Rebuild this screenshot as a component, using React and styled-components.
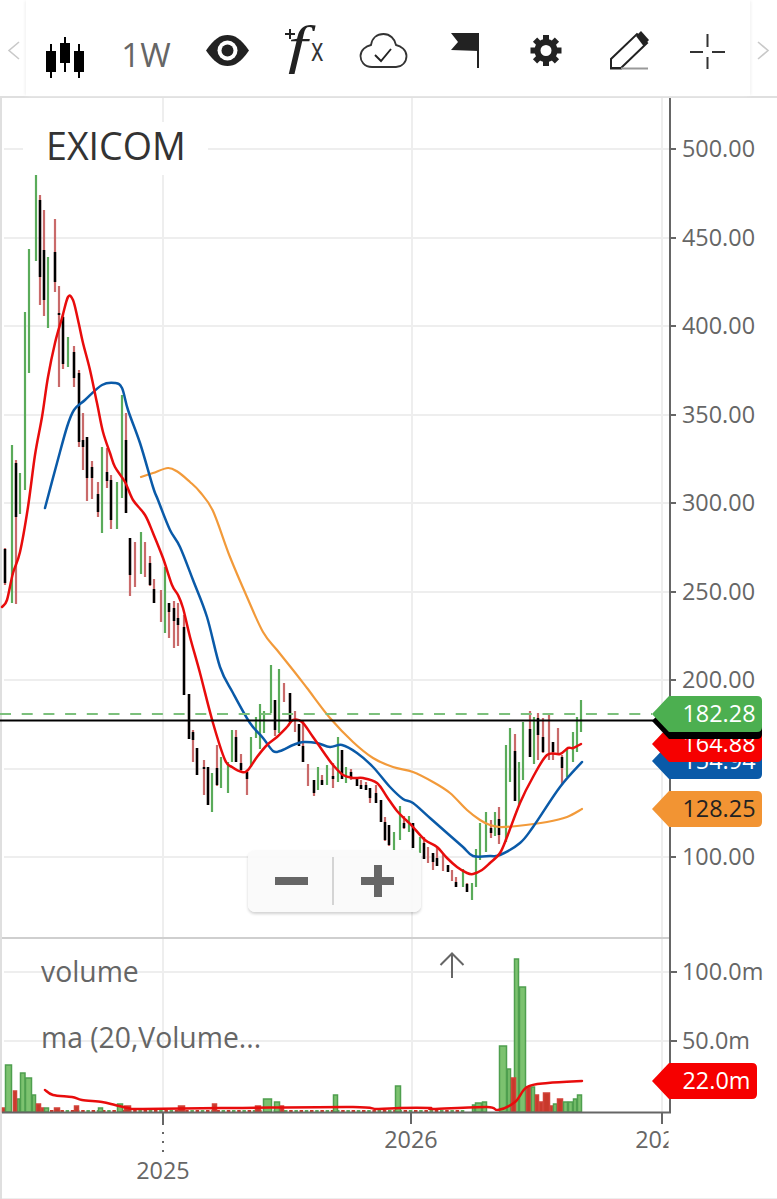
import React from "react";
import styled, { createGlobalStyle } from "styled-components";

const GlobalStyle = createGlobalStyle`
  html, body {
    margin: 0;
    padding: 0;
    background: #fff;
    font-family: "Open Sans", "Noto Sans", sans-serif;
  }
`;

const Page = styled.div`
  width: 777px;
  height: 1199px;
  display: flex;
  flex-direction: column;
  overflow: hidden;
  background: #fff;
`;

const Toolbar = styled.div`
  display: flex;
  height: 96px;
  flex-shrink: 0;
  border-bottom: 2px solid #dfdfdf;
`;

const NavArrow = styled.svg`
  width: ${({ $width }) => $width}px;
  height: 96px;
  flex-shrink: 0;
  display: block;
  fill: none;
  stroke: #c9c9c9;
  stroke-width: 1.6;
`;

const ToolStrip = styled.div`
  width: 724px;
  display: flex;
  flex-shrink: 0;
  box-shadow: -2px 0 3px -1px #f0f0f0, 2px 0 3px -1px #f0f0f0;
`;

const ToolButton = styled.div`
  width: 80px;
  height: 96px;
  flex-shrink: 0;
`;

const ToolSvg = styled.svg`
  display: block;
  width: 80px;
  height: 96px;
`;

const IntervalText = styled.div`
  width: 80px;
  height: 96px;
  padding-top: 33px;
  box-sizing: border-box;
  text-align: center;
  font-size: 33px;
  line-height: 44px;
  color: #666;
`;

const ChartArea = styled.div`
  position: relative;
  flex: 1;
  box-shadow: inset 2px 0 0 #dfdfdf, inset 0 -1px 0 #eee;
`;

const ChartSvg = styled.svg`
  display: block;
  width: 777px;
  height: 1101px;
`;

const GridLine = styled.line`
  stroke: #eee;
  stroke-width: 2;
`;

const AxisLine = styled.line`
  stroke: #666;
  stroke-width: 2;
`;

const AxisLabel = styled.text`
  font-family: "Open Sans", sans-serif;
  font-size: 23.4px;
  fill: ${({ $color }) => $color || "#666"};
`;

const MaLine = styled.path`
  fill: none;
  stroke: ${({ $color }) => $color};
  stroke-width: ${({ $width }) => $width || 2.5};
  stroke-linejoin: round;
  stroke-linecap: round;
`;

const SymbolLabel = styled.div`
  position: absolute;
  left: 23px;
  top: 24px;
  width: 185px;
  height: 53px;
  box-sizing: border-box;
  padding-left: 23px;
  background: #fff;
  font-size: 37.6px;
  line-height: 48px;
  color: #333;
`;

const StudyLabel = styled.div`
  position: absolute;
  left: 41px;
  top: ${({ $top }) => $top}px;
  font-size: 28.3px;
  line-height: 36px;
  color: #666;
  white-space: nowrap;
`;

const CollapseArrow = styled.svg`
  position: absolute;
  left: 438px;
  top: 853px;
  width: 28px;
  height: 29px;
  fill: none;
  stroke: #666;
  stroke-width: 2;
`;

const ZoomControl = styled.div`
  position: absolute;
  left: 248px;
  top: 752px;
  width: 173px;
  height: 62px;
  display: flex;
  align-items: center;
  border-radius: 7px;
  background: rgba(250, 250, 250, 0.92);
  box-shadow: 0 2px 3px rgba(0, 0, 0, 0.18);
`;

const ZoomButton = styled.div`
  position: relative;
  width: ${({ $width }) => $width}px;
  height: 48px;
  box-sizing: border-box;
  border-right: ${({ $divider }) => ($divider ? "2px solid #d4d4d4" : "none")};

  &::before {
    content: "";
    position: absolute;
    left: ${({ $left }) => $left}px;
    top: 20px;
    width: 33px;
    height: 8px;
    background: #666;
  }

  &::after {
    content: "";
    display: ${({ $plus }) => ($plus ? "block" : "none")};
    position: absolute;
    left: ${({ $left }) => $left + 12.5}px;
    top: 8px;
    width: 8px;
    height: 32px;
    background: #666;
  }
`;

const green = "#5aab5a";
const wickRed = "#c96a6a";

// [x, high, low] is an up week; [x, high, low, bodyTop, bodyBottom] is a down week
const bars = [
  [5, 548, 585, 549, 583], [12, 445, 603], [16, 460, 604, 463, 517], [20, 473, 514], [25, 312, 490], [29, 249, 373],
  [36, 175, 261], [40, 195, 305, 200, 277], [44, 210, 316, 250, 300], [48, 257, 328], [55, 219, 292, 252, 282],
  [59, 286, 387, 313, 315], [63, 314, 369, 317, 364], [68, 337, 367], [74, 346, 387, 352, 378], [79, 370, 447, 373, 442],
  [83, 413, 470, 440, 447], [87, 437, 501, 437, 478], [92, 461, 499, 467, 478], [98, 482, 517, 494, 512], [102, 447, 533],
  [107, 448, 488, 472, 481], [111, 475, 529, 480, 520], [117, 482, 529], [122, 395, 498], [126, 413, 513, 440, 513],
  [130, 538, 596, 538, 575], [135, 542, 587, 0, 0], [141, 532, 574], [145, 542, 577, 0, 0], [150, 556, 586, 563, 585],
  [154, 579, 603, 589, 603], [161, 590, 622, 0, 0], [165, 567, 633], [169, 603, 638, 603, 612], [174, 601, 648, 608, 621],
  [178, 603, 646, 618, 625], [184, 615, 695, 627, 695], [189, 694, 739, 694, 739], [193, 730, 762, 732, 740],
  [197, 748, 775, 748, 775], [204, 760, 795, 767, 769], [208, 767, 805, 767, 805], [212, 773, 812], [217, 745, 786, 768, 785],
  [221, 757, 788], [228, 762, 793], [232, 730, 762], [236, 730, 762, 737, 762], [241, 754, 772, 763, 770],
  [247, 772, 795, 772, 779], [251, 737, 767], [256, 717, 738], [260, 704, 749], [264, 711, 733], [271, 665, 713],
  [275, 700, 736, 700, 730], [279, 669, 733], [284, 683, 702, 0, 0], [290, 693, 722, 693, 722], [295, 711, 732, 0, 0],
  [299, 724, 746, 724, 746], [303, 720, 762, 746, 762], [308, 764, 786, 0, 0], [314, 780, 796, 780, 793], [318, 767, 790],
  [322, 775, 785, 780, 785], [327, 765, 785], [333, 763, 788, 776, 779], [338, 737, 782], [342, 750, 779, 750, 779],
  [346, 767, 783], [351, 769, 780, 772, 778], [357, 779, 786, 779, 786], [361, 780, 789, 785, 789], [366, 782, 790, 785, 790],
  [370, 788, 803, 788, 798], [376, 785, 803, 793, 803], [381, 800, 822, 800, 822], [385, 817, 841, 822, 840],
  [389, 825, 846, 825, 845], [394, 832, 850], [400, 806, 840], [404, 816, 829, 823, 828], [409, 816, 832],
  [413, 823, 848, 823, 848], [420, 837, 853], [424, 837, 859, 843, 859], [428, 847, 863, 0, 0], [433, 853, 870, 853, 862],
  [437, 847, 866, 858, 866], [443, 853, 871, 0, 0], [448, 865, 872, 865, 872], [452, 870, 881, 0, 0], [456, 877, 887, 882, 887],
  [463, 869, 887], [467, 883, 892, 884, 892], [472, 883, 900], [476, 849, 887], [480, 823, 860], [486, 812, 852],
  [491, 820, 838, 828, 833], [495, 812, 836], [499, 807, 844, 819, 835], [506, 745, 842], [510, 728, 782],
  [515, 734, 801, 751, 801], [519, 762, 805], [523, 722, 780], [530, 711, 757, 729, 757], [534, 717, 764],
  [538, 713, 760, 718, 735], [543, 718, 753, 737, 752], [549, 715, 760, 0, 0], [553, 742, 760, 742, 752], [558, 728, 755, 0, 0],
  [562, 755, 785, 757, 768], [567, 750, 777], [573, 732, 762], [577, 717, 752], [581, 700, 732],
];

// catmull-rom through the points, the moving averages are smooth in the chart
const smoothPath = (pts) => {
  let d = `M${pts[0][0]} ${pts[0][1]}`;
  for (let i = 0; i < pts.length - 1; i++) {
    const p0 = pts[i - 1] || pts[i];
    const p1 = pts[i];
    const p2 = pts[i + 1];
    const p3 = pts[i + 2] || p2;
    const c1x = p1[0] + (p2[0] - p0[0]) / 6;
    const c1y = p1[1] + (p2[1] - p0[1]) / 6;
    const c2x = p2[0] - (p3[0] - p1[0]) / 6;
    const c2y = p2[1] - (p3[1] - p1[1]) / 6;
    d += ` C${c1x.toFixed(1)} ${c1y.toFixed(1)} ${c2x.toFixed(1)} ${c2y.toFixed(1)} ${p2[0]} ${p2[1]}`;
  }
  return d;
};

const redMa = [
  [2, 607], [7, 600], [13, 573], [20, 552], [28, 507], [35, 455], [42, 417], [48, 377], [55, 343], [62, 318], [68, 297],
  [73, 300], [78, 320], [83, 343], [90, 370], [97, 403], [103, 432], [110, 453], [115, 467], [125, 482], [133, 500],
  [145, 515], [153, 533], [163, 558], [172, 585], [178, 595], [183, 608], [190, 637], [200, 673], [213, 723], [225, 760],
  [232, 767], [242, 772], [248, 770], [257, 757], [267, 745], [277, 737], [287, 727], [293, 720], [302, 722], [313, 737],
  [327, 757], [333, 765], [343, 775], [353, 778], [363, 778], [377, 783], [387, 797], [397, 811], [407, 821], [413, 827],
  [425, 840], [437, 847], [447, 858], [457, 867], [467, 873], [473, 874], [482, 870], [490, 863], [500, 853], [507, 837],
  [520, 803], [533, 777], [547, 755], [560, 754], [568, 748], [573, 748], [581, 744],
];

const blueMa = [
  [45, 508], [57, 463], [67, 427], [74, 410], [85, 400], [102, 385], [115, 383], [122, 388], [128, 410], [140, 443],
  [153, 487], [158, 500], [170, 530], [180, 547], [193, 580], [207, 617], [220, 667], [233, 693], [250, 723], [263, 738],
  [273, 751], [280, 751], [293, 745], [303, 742], [317, 743], [330, 747], [342, 745], [357, 753], [373, 767], [390, 787],
  [403, 799], [413, 803], [430, 818], [447, 833], [463, 847], [473, 856], [490, 856], [500, 855], [520, 843], [533, 827],
  [560, 787], [582, 762],
];

const orangeMa = [
  [141, 477], [153, 473], [168, 468], [178, 472], [190, 482], [200, 492], [213, 511], [230, 557], [247, 597], [263, 632],
  [277, 650], [293, 670], [307, 688], [330, 718], [353, 742], [373, 758], [393, 767], [413, 772], [433, 782], [450, 793],
  [467, 810], [480, 820], [490, 825], [500, 827], [517, 826], [547, 822], [567, 817], [582, 809],
];

const volumeMa = [
  [45, 1090], [53, 1095], [72, 1097], [82, 1100], [102, 1102], [115, 1105], [128, 1108], [143, 1109], [233, 1108], [353, 1107],
  [377, 1109], [400, 1108], [430, 1108], [433, 1109], [487, 1107], [498, 1110], [515, 1102], [527, 1087], [548, 1083], [582, 1081],
];

// [left, right, top, up?]
const volumes = [
  [2, 6, 1108, 0], [5, 12, 1065, 1], [17, 20, 1099, 1], [13, 17, 1091, 0], [20, 25.5, 1073, 1], [25, 32, 1078, 1], [32, 36, 1095, 1],
  [36, 41, 1104, 0], [41, 44, 1108, 0], [44, 49, 1108, 1], [54, 60, 1108, 0], [74, 79, 1106, 0], [98, 103, 1108, 1], [117, 123, 1104, 1],
  [124, 131, 1106, 0], [178, 185, 1106, 0], [212, 217, 1104, 0], [255, 261, 1106, 0], [263, 272, 1099, 1], [274, 280, 1102, 1],
  [280, 284, 1106, 0], [333, 338, 1095, 1], [395, 401, 1086, 1], [472, 475, 1105, 1], [475, 482, 1103, 1], [482, 487, 1102, 1],
  [499, 507, 1046, 1], [507, 511, 1069, 1], [514, 519, 959, 1], [519, 526, 987, 1], [511, 516, 1078, 0], [526, 531, 1087, 0],
  [531, 535, 1087, 1], [535, 539, 1095, 0], [539, 543, 1102, 0], [543, 550, 1093, 0], [550, 553, 1106, 0], [553, 557, 1104, 1],
  [557, 563, 1099, 0], [563, 568, 1102, 1], [568, 573, 1102, 1], [573, 577, 1099, 1], [577, 582, 1095, 1],
];

const lowVolumes = Array.from({ length: 80 }, (_, i) => 50 + i * 5.2);

const priceGrid = [149, 238, 326, 415, 503, 592, 680, 769, 857];
const priceLabels = [
  ["500.00", 149], ["450.00", 238], ["400.00", 326], ["350.00", 415], ["300.00", 503], ["250.00", 592], ["200.00", 680], ["100.00", 857],
];

const tags = [
  { y: 809, fill: "#f29433", text: "128.25", color: "#222", right: 762 },
  { y: 761, fill: "#0a5aa8", text: "154.94", color: "#fff", right: 762 },
  { y: 744, fill: "#f60000", text: "164.88", color: "#fff", right: 762 },
  { y: 721, fill: "#000", text: "", color: "#fff", right: 762 },
  { y: 714, fill: "#4caf50", text: "182.28", color: "#fff", right: 762 },
  { y: 1081, fill: "#f60000", text: "22.0m", color: "#fff", right: 757 },
];

const tagPath = (y, right) =>
  `M652 ${y} L669 ${y - 18} H${right - 5} Q${right} ${y - 18} ${right} ${y - 13} V${y + 13} Q${right} ${y + 18} ${right - 5} ${y + 18} H669 Z`;

const Bar = ({ bar }) => {
  const [x, hi, lo, top, bottom] = bar;
  if (bar.length === 3) {
    return <line x1={x} x2={x} y1={hi} y2={lo} stroke={green} strokeWidth="2.2" />;
  }
  return (
    <>
      <line x1={x} x2={x} y1={hi} y2={lo} stroke={wickRed} strokeWidth="2.2" />
      {top > 0 && <line x1={x} x2={x} y1={top} y2={bottom} stroke="#000" strokeWidth="2.5" />}
    </>
  );
};

const Tool = ({ index, children }) => (
  <ToolButton>
    <ToolSvg viewBox={`${26 + index * 80} 0 80 96`}>{children}</ToolSvg>
  </ToolButton>
);

const gearTeeth = [0, 45, 90, 135, 180, 225, 270, 315];

const App = () => {
  return (
    <Page>
      <GlobalStyle />
      <Toolbar>
        <NavArrow $width={26} viewBox="0 0 26 96">
          <polyline points="19,42 9,50.5 19,59" />
        </NavArrow>
        <ToolStrip>
          <Tool index={0}>
            <g fill="#000">
              <rect x="46" y="51" width="10" height="21" />
              <rect x="60" y="43" width="10" height="20" />
              <rect x="74" y="51" width="10" height="21" />
              <rect x="50" y="44" width="2" height="34" />
              <rect x="64" y="37" width="2" height="35" />
              <rect x="78" y="44" width="2" height="34" />
            </g>
          </Tool>
          <ToolButton>
            <IntervalText>1W</IntervalText>
          </ToolButton>
          <Tool index={2}>
            <path d="M206 50.5 C214 39 220 35 227.5 35 C235 35 241 39 249 50.5 C241 62 235 66 227.5 66 C220 66 214 62 206 50.5 Z" fill="#222" />
            <circle cx="227.5" cy="50.5" r="10" fill="#fff" />
            <circle cx="227.5" cy="50.5" r="6" fill="#222" />
          </Tool>
          <Tool index={3}>
            <path d="M285 34 H295 M290 29 V39" stroke="#222" strokeWidth="2" />
            <text transform="translate(288 63) scale(1.35 1)" fontFamily="Liberation Serif, serif" fontStyle="italic" fontSize="52" fill="#222">f</text>
            <text transform="translate(311 61) scale(0.72 1)" fontFamily="Open Sans, sans-serif" fontSize="33" fill="#333">x</text>
          </Tool>
          <Tool index={4}>
            <path d="M372 67 C364 67 360.5 61 360.5 56 C360.5 50 366 46 371 45 C372 38 377 34 383.5 34 C390 34 395 39 396 45 C401 46 406.5 50 406.5 56 C406.5 62 402 67 396 67 Z" fill="none" stroke="#333" strokeWidth="1.8" />
            <path d="M375 55 L381 61 L391 49" fill="none" stroke="#222" strokeWidth="1.9" />
          </Tool>
          <Tool index={5}>
            <path d="M451 50 L458 42 L451 33 H479 V51 Z" fill="#222" />
            <rect x="477" y="33" width="2" height="35" fill="#222" />
          </Tool>
          <Tool index={6}>
            <circle cx="546" cy="50.5" r="8.5" fill="none" stroke="#222" strokeWidth="6" />
            {gearTeeth.map((a) => (
              <rect key={a} x="543" y="35" width="6" height="6" fill="#222" transform={`rotate(${a} 546 50.5)`} />
            ))}
          </Tool>
          <Tool index={7}>
            <path d="M611 68 V59 L637 34 L647 43 L621 68 Z" fill="none" stroke="#222" strokeWidth="2" />
            <path d="M636 36 L641 31 L649 40 L643.5 46 Z" fill="#222" />
            <path d="M610 68.5 H622" stroke="#222" strokeWidth="2" />
            <path d="M621 68.5 H648" stroke="#999" strokeWidth="2" />
          </Tool>
          <Tool index={8}>
            <path d="M690 52 H703 M712 52 H725 M707.5 34 V47 M707.5 57 V69" stroke="#333" strokeWidth="2" />
          </Tool>
        </ToolStrip>
        <NavArrow $width={27} viewBox="750 0 27 96">
          <polyline points="758,42 768,50.5 758,59" />
        </NavArrow>
      </Toolbar>

      <ChartArea>
        <ChartSvg viewBox="0 98 777 1101">
          <defs>
            <clipPath id="timeAxisClip">
              <rect x="0" y="1113" width="668.5" height="60" />
            </clipPath>
          </defs>

          {priceGrid.map((y) => (
            <GridLine key={y} x1="4" x2="669" y1={y} y2={y} />
          ))}
          {[972, 1041].map((y) => (
            <GridLine key={y} x1="4" x2="669" y1={y} y2={y} />
          ))}
          {[163, 412, 662].map((x) => (
            <GridLine key={x} x1={x} x2={x} y1="98" y2="1112" />
          ))}

          {bars.map((bar) => (
            <Bar key={bar[0]} bar={bar} />
          ))}

          <MaLine $color="#f29a3a" $width={2.2} d={smoothPath(orangeMa)} />
          <MaLine $color="#0a5aa8" d={smoothPath(blueMa)} />
          <MaLine $color="#e80c0c" d={smoothPath(redMa)} />

          <line x1="0" x2="652" y1="714" y2="714" stroke="#7cc07c" strokeWidth="2" strokeDasharray="11 10.7" />
          <line x1="0" x2="655" y1="720.5" y2="720.5" stroke="#000" strokeWidth="2" />

          <line x1="2" x2="670" y1="938" y2="938" stroke="#cfcfcf" strokeWidth="2" />

          {lowVolumes.map((x, i) => (
            <rect key={x} x={x} y="1110" width="3.5" height="2" fill={i % 2 ? "#5aab5a" : "#c8392b"} />
          ))}
          {volumes.map(([left, right, top, up]) => (
            <rect
              key={left}
              x={left + 0.5}
              y={top}
              width={right - left - 1}
              height={1112 - top}
              fill={up ? "#7cc26f" : "#c8392b"}
              stroke={up ? "#4f9f4f" : "#d2433a"}
              strokeWidth="1.5"
            />
          ))}
          <MaLine $color="#e80c0c" d={smoothPath(volumeMa)} />

          <AxisLine x1="670" x2="670" y1="97" y2="1113" />
          <AxisLine x1="2" x2="671" y1="1112.5" y2="1112.5" />
          {priceLabels.map(([text, y]) => (
            <g key={text}>
              <AxisLine x1="670" x2="676" y1={y} y2={y} />
              <AxisLabel x="682" y={y + 8}>{text}</AxisLabel>
            </g>
          ))}
          <AxisLine x1="670" x2="677" y1="972" y2="972" />
          <AxisLabel x="682" y="980">100.0m</AxisLabel>
          <AxisLine x1="670" x2="677" y1="1041" y2="1041" />
          <AxisLabel x="682" y="1049">50.0m</AxisLabel>

          <AxisLine x1="163" x2="163" y1="1113" y2="1125" />
          <line x1="163" x2="163" y1="1132" y2="1152" stroke="#666" strokeWidth="2" strokeDasharray="2 7" />
          <AxisLine x1="411" x2="411" y1="1113" y2="1124" />
          <AxisLine x1="662" x2="662" y1="1113" y2="1124" />
          <AxisLabel x="163" y="1179" textAnchor="middle">2025</AxisLabel>
          <AxisLabel x="411" y="1148" textAnchor="middle">2026</AxisLabel>
          <g clipPath="url(#timeAxisClip)">
            <AxisLabel x="662" y="1148" textAnchor="middle">2027</AxisLabel>
          </g>

          {tags.map((tag) => (
            <g key={tag.y}>
              <path d={tagPath(tag.y, tag.right)} fill={tag.fill} />
              {tag.text && (
                <AxisLabel x="682.5" y={tag.y + 8} $color={tag.color}>{tag.text}</AxisLabel>
              )}
            </g>
          ))}
        </ChartSvg>

        <SymbolLabel>EXICOM</SymbolLabel>
        <StudyLabel $top={855}>volume</StudyLabel>
        <StudyLabel $top={921}>ma (20,Volume...</StudyLabel>
        <CollapseArrow viewBox="0 0 28 29">
          <path d="M14 27 V3 M2.5 14 L14 2.5 L25.5 14" />
        </CollapseArrow>
        <ZoomControl>
          <ZoomButton $width={86} $left={27} $divider />
          <ZoomButton $width={87} $left={27} $plus />
        </ZoomControl>
      </ChartArea>
    </Page>
  );
};

export default App;
